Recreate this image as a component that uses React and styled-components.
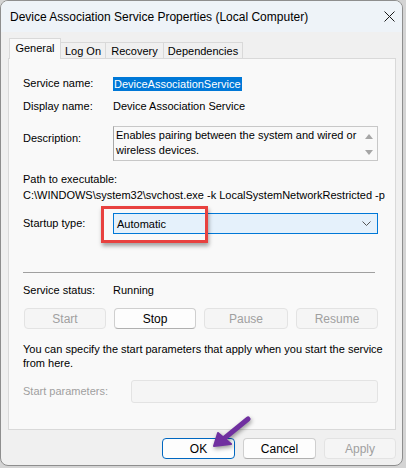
import React from "react";
import styled, { createGlobalStyle } from "styled-components";

const GlobalStyle = createGlobalStyle`
  html, body {
    margin: 0;
    padding: 0;
    background: #d4d4d4;
  }
  body {
    font-family: "Segoe UI", "Liberation Sans", Arial, sans-serif;
    font-size: 11px;
    color: #000;
  }
`;

const Window = styled.div`
  position: relative;
  width: 401px;
  height: 464px;
  border: 1px solid #8e8e8e;
  border-radius: 8px;
  overflow: hidden;
  display: flex;
  flex-direction: column;
  background: #f0f0f0;
  box-sizing: content-box;
`;

const TitleBar = styled.div`
  height: 31px;
  flex: none;
  display: flex;
  align-items: center;
  justify-content: space-between;
  padding: 0 0 0 9px;
  background: #eef3f8;
  font-size: 12px;
`;

const CloseButton = styled.div`
  width: 24px;
  height: 31px;
  display: flex;
  align-items: center;
  justify-content: center;
  margin-right: 1px;
`;

const Body = styled.div`
  flex: 1;
  display: flex;
  flex-direction: column;
  padding: 7px 6px 0 7px;
`;

const TabStrip = styled.div`
  display: flex;
  align-items: flex-end;
  height: 20px;
  padding-left: 1px;
  position: relative;
  z-index: 1;
`;

const Tab = styled.div`
  height: ${(p) => (p.$active ? "21px" : "17px")};
  width: ${(p) => p.$width}px;
  display: flex;
  align-items: center;
  justify-content: center;
  border: 1px solid #d9d9d9;
  border-bottom: ${(p) => (p.$active ? "none" : "1px solid #d9d9d9")};
  margin-left: ${(p) => (p.$first ? "0" : "-1px")};
  background: ${(p) => (p.$active ? "#f9f9f9" : "#f0f0f0")};
  padding-bottom: ${(p) => (p.$active ? "3px" : "0")};
  box-sizing: border-box;
`;

const Panel = styled.div`
  height: 372px;
  border: 1px solid #d9d9d9;
  background: #f9f9f9;
  margin-top: -1px;
  padding: 0 17px 0 14px;
  box-sizing: border-box;
  display: flex;
  flex-direction: column;
`;

const Row = styled.div`
  display: grid;
  grid-template-columns: ${(p) => p.$label || 90}px 1fr;
  align-items: ${(p) => p.$align || "center"};
  margin-top: ${(p) => p.$top || 0}px;
  position: relative;
`;

const Label = styled.div`
  line-height: 15px;
  color: ${(p) => (p.$disabled ? "#a0a0a0" : "#000")};
  padding-top: ${(p) => p.$shift || 0}px;
`;

const Text = styled.div`
  line-height: 15px;
  margin-top: ${(p) => p.$top || 0}px;
  white-space: nowrap;
`;

const Selected = styled.span`
  background: #0078d7;
  color: #fff;
  padding: 0 1px;
  line-height: 14px;
  display: inline-block;
`;

const MemoBox = styled.div`
  height: 35px;
  border: 1px solid #c8c8c8;
  border-left-color: #a8a8a8;
  background: #f9f9f9;
  display: flex;
  box-sizing: border-box;
`;

const MemoText = styled.div`
  flex: 1;
  padding: 1px 0 0 2px;
  line-height: 15px;
  white-space: nowrap;
`;

const ScrollTrack = styled.div`
  width: 16px;
  display: flex;
  flex-direction: column;
  justify-content: space-between;
  align-items: center;
  padding: 7px 0 5px;
`;

const Combo = styled.div`
  height: 21px;
  border: 1px solid #0078d7;
  background: #e5f1fb;
  display: flex;
  align-items: center;
  justify-content: space-between;
  padding: 0 6px 0 3px;
  box-sizing: border-box;
`;

const Callout = styled.div`
  position: absolute;
  left: 78px;
  top: -7px;
  width: 107px;
  height: 37px;
  border: 3px solid #e8413f;
  box-sizing: border-box;
  box-shadow: 1px 3px 4px rgba(0, 0, 0, 0.35);
  pointer-events: none;
`;

const Divider = styled.div`
  height: 1px;
  background: #a0a0a0;
  margin: ${(p) => p.$top}px 3px 0 0;
`;

const ButtonRow = styled.div`
  display: flex;
  gap: ${(p) => p.$gap || 8}px;
  margin-top: ${(p) => p.$top || 0}px;
  padding-left: ${(p) => p.$indent || 0}px;
`;

const Button = styled.div`
  width: ${(p) => p.$width || 82}px;
  height: 21px;
  box-sizing: border-box;
  border-radius: 4px;
  display: flex;
  align-items: center;
  justify-content: center;
  border: 1px solid
    ${(p) => (p.$primary ? "#0067c0" : p.$disabled ? "#e3e3e3" : "#cfcfcf")};
  border-bottom-color: ${(p) =>
    p.$primary ? "#0067c0" : p.$disabled ? "#e3e3e3" : "#b0b0b0"};
  background: ${(p) => (p.$disabled ? "#f5f5f5" : "#fdfdfd")};
  color: ${(p) => (p.$disabled ? "#a0a0a0" : "#000")};
  font-size: 12px;
`;

const Paragraph = styled.div`
  line-height: 14px;
  margin-top: ${(p) => p.$top}px;
  white-space: nowrap;
`;

const ParamInput = styled.div`
  height: 23px;
  border: 1px solid #e3e3e3;
  border-radius: 3px;
  background: #f5f5f5;
  box-sizing: border-box;
`;

const Footer = styled.div`
  display: flex;
  justify-content: flex-end;
  gap: 8px;
  margin-top: 8px;
`;

const Pointer = styled.svg`
  position: absolute;
  left: 200px;
  top: 414px;
  overflow: visible;
  pointer-events: none;
  filter: drop-shadow(1px 2px 2px rgba(0, 0, 0, 0.4));
`;

const tabs = [
  ["General", 52],
  ["Log On", 46],
  ["Recovery", 59],
  ["Dependencies", 80],
];

export default function App() {
  return (
    <>
      <GlobalStyle />
      <Window>
        <TitleBar>
          <span>Device Association Service Properties (Local Computer)</span>
          <CloseButton>
            <svg width="11" height="11" viewBox="0 0 11 11">
              <path d="M0.5 0.5L10.5 10.5M10.5 0.5L0.5 10.5" stroke="#1a1a1a" strokeWidth="1" />
            </svg>
          </CloseButton>
        </TitleBar>
        <Body>
          <TabStrip>
            {tabs.map(([t, w], i) => (
              <Tab key={t} $active={i === 0} $first={i === 0} $width={w}>
                {t}
              </Tab>
            ))}
          </TabStrip>
          <Panel>
            <Row $top={17}>
              <Label>Service name:</Label>
              <div>
                <Selected>DeviceAssociationService</Selected>
              </div>
            </Row>
            <Row $top={8}>
              <Label>Display name:</Label>
              <Text>Device Association Service</Text>
            </Row>
            <Row $top={12} $align="start">
              <Label $shift={5}>Description:</Label>
              <MemoBox>
                <MemoText>
                  Enables pairing between the system and wired or
                  <br />
                  wireless devices.
                </MemoText>
                <ScrollTrack>
                  <svg width="8" height="5" viewBox="0 0 8 5">
                    <path d="M0 5L4 0L8 5Z" fill="#a6a6a6" />
                  </svg>
                  <svg width="8" height="5" viewBox="0 0 8 5">
                    <path d="M0 0L8 0L4 5Z" fill="#a6a6a6" />
                  </svg>
                </ScrollTrack>
              </MemoBox>
            </Row>
            <Text $top={11}>Path to executable:</Text>
            <Text $top={1}>
              C:\WINDOWS\system32\svchost.exe -k LocalSystemNetworkRestricted -p
            </Text>
            <Row $top={10}>
              <Label>Startup type:</Label>
              <Combo>
                <span>Automatic</span>
                <svg width="9" height="5" viewBox="0 0 9 5">
                  <path d="M0.5 0.5L4.5 4.5L8.5 0.5" fill="none" stroke="#555" strokeWidth="1" />
                </svg>
              </Combo>
              <Callout />
            </Row>
            <Divider $top={38} />
            <Row $top={10}>
              <Label>Service status:</Label>
              <Text>Running</Text>
            </Row>
            <ButtonRow $top={10} $gap={8} $indent={1}>
              <Button $disabled>Start</Button>
              <Button>Stop</Button>
              <Button $disabled $width={84}>Pause</Button>
              <Button $disabled>Resume</Button>
            </ButtonRow>
            <Paragraph $top={13}>
              You can specify the start parameters that apply when you start the service
              <br />
              from here.
            </Paragraph>
            <Row $top={10} $label={108}>
              <Label $disabled>Start parameters:</Label>
              <ParamInput />
            </Row>
          </Panel>
          <Footer>
            <Button $primary $width={73}>OK</Button>
            <Button $width={73}>Cancel</Button>
            <Button $disabled $width={72}>Apply</Button>
          </Footer>
        </Body>
        <Pointer width="50" height="36" viewBox="0 0 50 36">
          <path d="M47 4L20 26" stroke="#7030a0" strokeWidth="5" strokeLinecap="round" />
          <path d="M13 31L17 18L30 29Z" fill="#7030a0" stroke="#7030a0" strokeWidth="2" strokeLinejoin="round" />
        </Pointer>
      </Window>
    </>
  );
}
